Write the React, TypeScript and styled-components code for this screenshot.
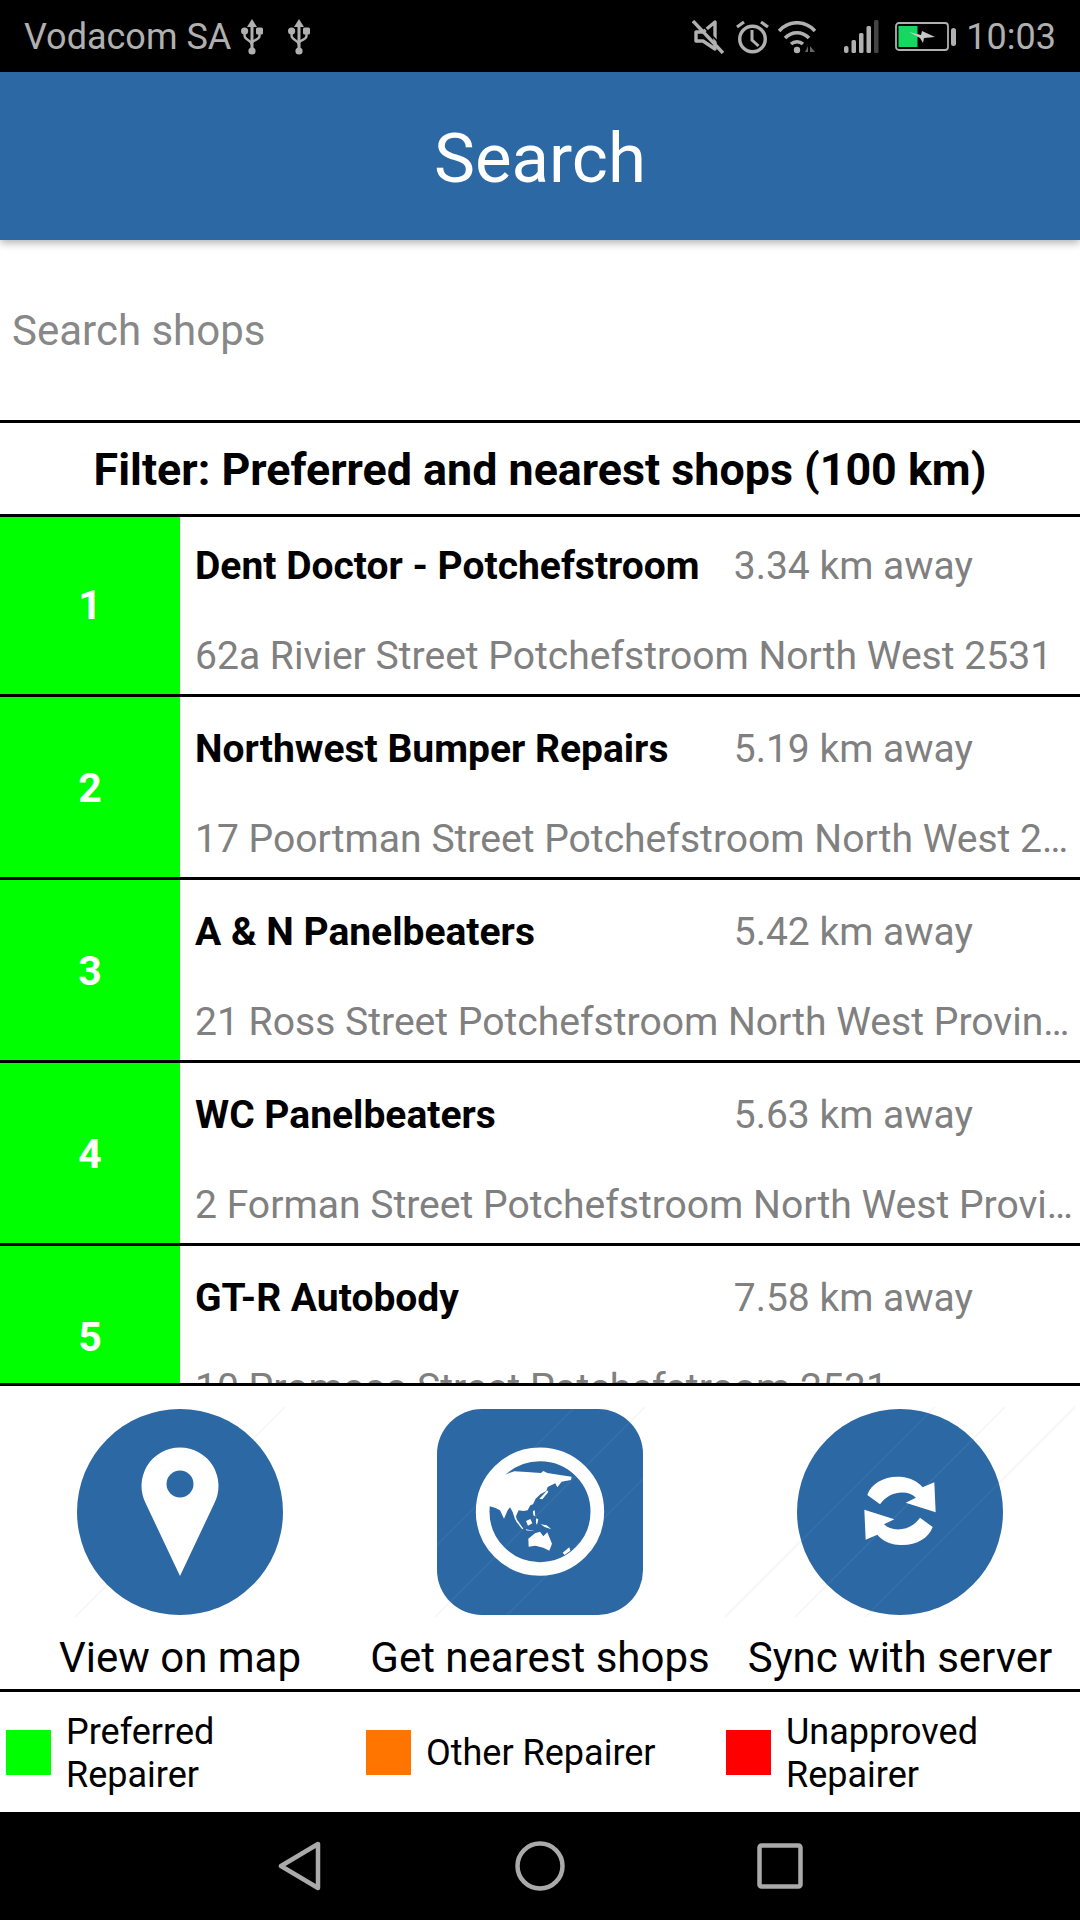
import React from "react";
import styled, { createGlobalStyle } from "styled-components";

const BLUE = "#2b68a4";
const GREY = "#b0b0b0";

const GlobalStyle = createGlobalStyle`
  html, body {
    margin: 0;
    padding: 0;
    background: #fff;
  }
  * {
    box-sizing: border-box;
  }
`;

const Page = styled.div`
  display: flex;
  flex-direction: column;
  width: 1080px;
  height: 1920px;
  overflow: hidden;
  font-family: Roboto, "Liberation Sans", sans-serif;
  background: #fff;
`;

const StatusBar = styled.div`
  display: flex;
  align-items: center;
  justify-content: space-between;
  height: 72px;
  padding: 2px 24px 0 24px;
  background: #000;
  color: ${GREY};
  font-size: 36px;
`;
const StatusGroup = styled.div`
  display: flex;
  align-items: center;
`;
const StatusIcon = styled.svg<{ $gap: number }>`
  display: block;
  flex: none;
  margin-left: ${(props) => props.$gap}px;
`;
const Clock = styled.span`
  margin-left: 10px;
`;

const AppBar = styled.header`
  position: relative;
  z-index: 2;
  display: flex;
  align-items: center;
  justify-content: center;
  height: 168px;
  padding-top: 5px;
  background: ${BLUE};
  color: #fff;
  font-size: 69px;
  box-shadow: 0 3px 8px rgba(0, 0, 0, 0.3);
`;

const SearchBox = styled.div`
  display: flex;
  align-items: center;
  height: 180px;
  padding-left: 12px;
`;
const SearchInput = styled.input`
  width: 100%;
  border: none;
  outline: none;
  padding: 0;
  background: transparent;
  font-family: inherit;
  font-size: 42px;

  &::placeholder {
    color: #888;
    opacity: 1;
  }
`;

const FilterBar = styled.div`
  position: relative;
  z-index: 1;
  display: flex;
  align-items: center;
  justify-content: center;
  height: 97px;
  padding-top: 2px;
  border-top: 3px solid #000;
  border-bottom: 3px solid #000;
  background: #fff;
  font-size: 44.8px;
  font-weight: 700;
  color: #000;
`;

// the list sits 3px up under the filter bar, so its first row looks shorter
const ShopList = styled.div`
  height: 869px;
  margin-top: -3px;
  overflow: hidden;
`;
const ShopRow = styled.div`
  display: flex;
  height: 183px;
  border-bottom: 3px solid #000;
`;
const RankCell = styled.div`
  display: flex;
  flex: none;
  align-items: center;
  justify-content: center;
  width: 180px;
  padding-top: 2px;
  background: #00ff00;
  color: #fff;
  font-size: 41px;
  font-weight: 700;
`;
const ShopBody = styled.div`
  flex: 1;
  min-width: 0;
  padding: 0 4px 0 15px;
`;
const ShopHead = styled.div`
  display: flex;
  align-items: center;
  height: 104px;
`;
const ShopName = styled.div`
  width: 538px;
  flex: none;
  font-size: 39px;
  font-weight: 700;
  color: #000;
`;
const Distance = styled.div`
  width: 240px;
  text-align: right;
  font-size: 39px;
  color: #808080;
  white-space: nowrap;
`;
const Address = styled.div`
  height: 76px;
  line-height: 76px;
  font-size: 39.1px;
  color: #808080;
  white-space: nowrap;
  overflow: hidden;
  text-overflow: ellipsis;
`;

const Actions = styled.div`
  display: grid;
  grid-template-columns: repeat(3, 360px);
  height: 309px;
  padding-top: 23px;
  border-top: 3px solid #000;
  border-bottom: 3px solid #000;
`;
const Action = styled.div`
  display: flex;
  flex-direction: column;
  align-items: center;
`;
const ActionIcon = styled.svg`
  display: block;
  overflow: visible;
`;
const ActionLabel = styled.div`
  margin-top: 20px;
  line-height: 46px;
  font-size: 42px;
  color: #000;
  white-space: nowrap;
`;

const Legend = styled.div`
  display: grid;
  grid-template-columns: repeat(3, 360px);
  height: 120px;
`;
const LegendItem = styled.div`
  display: flex;
  align-items: center;
  gap: 15px;
  padding-left: 6px;
`;
const Swatch = styled.div<{ $color: string }>`
  flex: none;
  width: 45px;
  height: 45px;
  background: ${(props) => props.$color};
`;
const LegendText = styled.div`
  padding-top: 3px;
  font-size: 36px;
  line-height: 43px;
  color: #000;
`;

const NavBar = styled.div`
  display: flex;
  align-items: center;
  justify-content: center;
  height: 108px;
  background: #000;
`;
const NavSlot = styled.div`
  display: flex;
  justify-content: center;
  width: 240px;
`;

const shops = [
  { name: "Dent Doctor - Potchefstroom", km: "3.34", address: "62a Rivier Street Potchefstroom North West 2531" },
  { name: "Northwest Bumper Repairs", km: "5.19", address: "17 Poortman Street Potchefstroom North West 2531" },
  { name: "A & N Panelbeaters", km: "5.42", address: "21 Ross Street Potchefstroom North West Province 2531" },
  { name: "WC Panelbeaters", km: "5.63", address: "2 Forman Street Potchefstroom North West Province 2531" },
  { name: "GT-R Autobody", km: "7.58", address: "10 Promoso Street Potchefstroom 2531" },
];

const UsbIcon = ({ gap }: { gap: number }) => (
  <StatusIcon $gap={gap} width="22" height="36" viewBox="0 0 22 36">
    <path d="M11 0l5 8h-3.5v21h-3V8H6z" fill={GREY} />
    <circle cx="11" cy="32" r="3.6" fill={GREY} />
    <circle cx="3.6" cy="12" r="3.6" fill={GREY} />
    <rect x="15" y="8.5" width="7" height="7" rx="1.5" fill={GREY} />
    <path d="M3.6 14v3c0 4 7.4 4 7.4 9M18.5 14v3c0 4-7.5 4-7.5 7" fill="none" stroke={GREY} strokeWidth="2.4" />
  </StatusIcon>
);

const StatusIcons = () => (
  <>
    <StatusIcon $gap={0} width="32" height="34" viewBox="0 0 32 34">
      <path d="M4 12h7L23 2v27L11 21H4z" fill="none" stroke={GREY} strokeWidth="3.4" strokeLinejoin="round" />
      <path d="M1 1l30 32" stroke={GREY} strokeWidth="3.4" />
      <path d="M1 1l30 32" stroke="#000" strokeWidth="1.5" transform="translate(3 -2.5)" />
    </StatusIcon>
    <StatusIcon $gap={12} width="33" height="34" viewBox="0 0 33 34">
      <circle cx="16.5" cy="19" r="12.8" fill="none" stroke={GREY} strokeWidth="3.4" />
      <path d="M16 10v10l6.5 6" fill="none" stroke={GREY} strokeWidth="3" />
      <path d="M1 7l7-5M32 7l-7-5" stroke={GREY} strokeWidth="3.2" />
    </StatusIcon>
    <StatusIcon $gap={9} width="38" height="33" viewBox="0 0 38 33">
      <path d="M1 10c10-11 26-11 36 0" fill="none" stroke={GREY} strokeWidth="3.6" />
      <path d="M7 17c7-7 17-7 24 0" fill="none" stroke={GREY} strokeWidth="3.6" />
      <path d="M13 23c3.500-3 8.500-3 12 0" fill="none" stroke={GREY} strokeWidth="3.6" />
      <circle cx="19" cy="29" r="3.2" fill={GREY} />
      <path d="M27 31l3-6v6zM32 25l5 6h-5z" fill="#666" />
    </StatusIcon>
    <StatusIcon $gap={28} width="35" height="34" viewBox="0 0 35 34">
      <rect x="0" y="26" width="4.500" height="7" rx="2" fill={GREY} />
      <rect x="7.500" y="20" width="4.500" height="13" rx="1.500" fill={GREY} />
      <rect x="15" y="13" width="4.500" height="20" rx="1.500" fill={GREY} />
      <rect x="22.500" y="6" width="4.500" height="27" rx="1.500" fill={GREY} />
      <rect x="30" y="0" width="4.500" height="33" rx="1.500" fill="#444" />
    </StatusIcon>
    <StatusIcon $gap={16} width="61" height="30" viewBox="0 0 61 30">
      <rect x="1" y="1" width="52" height="27" rx="3" fill="none" stroke={GREY} strokeWidth="1.800" />
      <rect x="3.500" y="4" width="19" height="21" fill="#16d860" />
      <path d="M14 10l12 3 1-4 13 6-11 1-1 5-3-5z" fill="#c8c8c8" />
      <rect x="56" y="6" width="5" height="18" rx="2.500" fill={GREY} />
    </StatusIcon>
  </>
);

const Hatch = ({ offsets, light }: { offsets: number[]; light?: boolean }) => (
  <>
    {offsets.map((o) => (
      <line
        key={o}
        x1={-2 + o}
        y1={208}
        x2={208 + o}
        y2={-2}
        stroke={light ? "#fff" : "#9a9a9a"}
        strokeOpacity={light ? 0.06 : 0.1}
        strokeWidth="1.500"
      />
    ))}
  </>
);

const PinIcon = () => (
  <ActionIcon width="206" height="206" viewBox="0 0 206 206">
    <Hatch offsets={[0]} />
    <circle cx="103" cy="103" r="103" fill={BLUE} />
    <path d="M69 95L103 167L137 95A38.500 38.500 0 1 0 69 95Z" fill="#fff" />
    <circle cx="103" cy="75" r="13.500" fill={BLUE} />
  </ActionIcon>
);

const GlobeIcon = () => (
  <ActionIcon width="206" height="206" viewBox="0 0 206 206">
    <Hatch offsets={[0]} />
    <rect width="206" height="206" rx="45" fill={BLUE} />
    <Hatch offsets={[-70, 0, 70]} light />
    <g transform="translate(23 21) scale(0.3333)" fill="#fff">
      <circle cx="240" cy="245" r="172" fill="none" stroke="#fff" strokeWidth="41" />
      <path d="M135 134L150 128L163 124L200 126L243 129L250 123L262 129L300 135L335 140L333 150L305 155L292 172L286 160L275 165L263 171L259 183L241 193L227 206L219 223L211 226L203 241L190 243L176 241L168 259L172 275L165 268L158 246L150 232L143 241L132 266L120 241L105 233L86 228L80 180L100 140Z" />
      <path d="M238 206L262 181L265 186L247 208Z" />
      <path d="M205 326L225 310L240 305L250 319L262 307L276 341L268 362L250 353L226 347L206 350Z" />
      <path d="M242 283L260 286L274 298L254 291Z" />
      <path d="M170 268L190 296L186 297L167 272Z" />
      <path d="M198 273L211 267L217 280L204 287Z" />
      <path d="M198 298L226 304L198 301Z" />
      <path d="M228 265L235 268L231 285L228 278Z" />
      <path d="M219 243L224 241L226 259L220 256Z" />
      <path d="M308 368L328 352L331 362L314 375Z" />
    </g>
  </ActionIcon>
);

const syncArc =
  "M82 135C95 95 150 70 205 85C225 90 240 103 248 112L283 97L287 187L197 158L228 143C205 120 150 120 120 163Z";

const SyncIcon = () => (
  <ActionIcon width="206" height="206" viewBox="0 0 206 206">
    <Hatch offsets={[-70, 0, 70]} />
    <circle cx="103" cy="103" r="103" fill={BLUE} />
    <Hatch offsets={[-70, 0, 70]} light />
    <g transform="translate(43 41) scale(0.3333)" fill="#fff">
      <path d={syncArc} />
      <path d={syncArc} transform="rotate(180 180 183)" />
    </g>
  </ActionIcon>
);

export default function App() {
  return (
    <Page>
      <GlobalStyle />
      <StatusBar>
        <StatusGroup>
          <span>Vodacom SA</span>
          <UsbIcon gap={10} />
          <UsbIcon gap={25} />
        </StatusGroup>
        <StatusGroup>
          <StatusIcons />
          <Clock>10:03</Clock>
        </StatusGroup>
      </StatusBar>
      <AppBar>Search</AppBar>
      <SearchBox>
        <SearchInput placeholder="Search shops" />
      </SearchBox>
      <FilterBar>Filter: Preferred and nearest shops (100 km)</FilterBar>
      <ShopList>
        {shops.map((shop, index) => (
          <ShopRow key={shop.name}>
            <RankCell>{index + 1}</RankCell>
            <ShopBody>
              <ShopHead>
                <ShopName>{shop.name}</ShopName>
                <Distance>{shop.km} km away</Distance>
              </ShopHead>
              <Address>{shop.address}</Address>
            </ShopBody>
          </ShopRow>
        ))}
      </ShopList>
      <Actions>
        <Action>
          <PinIcon />
          <ActionLabel>View on map</ActionLabel>
        </Action>
        <Action>
          <GlobeIcon />
          <ActionLabel>Get nearest shops</ActionLabel>
        </Action>
        <Action>
          <SyncIcon />
          <ActionLabel>Sync with server</ActionLabel>
        </Action>
      </Actions>
      <Legend>
        <LegendItem>
          <Swatch $color="#00ff00" />
          <LegendText>
            Preferred
            <br />
            Repairer
          </LegendText>
        </LegendItem>
        <LegendItem>
          <Swatch $color="#ff7500" />
          <LegendText>Other Repairer</LegendText>
        </LegendItem>
        <LegendItem>
          <Swatch $color="#ff0000" />
          <LegendText>
            Unapproved
            <br />
            Repairer
          </LegendText>
        </LegendItem>
      </Legend>
      <NavBar>
        <NavSlot>
          <svg width="44" height="50" viewBox="0 0 44 50">
            <path d="M40 3V47L3 25Z" fill="none" stroke="#aaa" strokeWidth="4.500" strokeLinejoin="round" />
          </svg>
        </NavSlot>
        <NavSlot>
          <svg width="50" height="50" viewBox="0 0 50 50">
            <circle cx="25" cy="25" r="22.500" fill="none" stroke="#aaa" strokeWidth="4.500" />
          </svg>
        </NavSlot>
        <NavSlot>
          <svg width="46" height="46" viewBox="0 0 46 46">
            <rect x="2.500" y="2.500" width="41" height="41" rx="2" fill="none" stroke="#aaa" strokeWidth="4.500" />
          </svg>
        </NavSlot>
      </NavBar>
    </Page>
  );
}
